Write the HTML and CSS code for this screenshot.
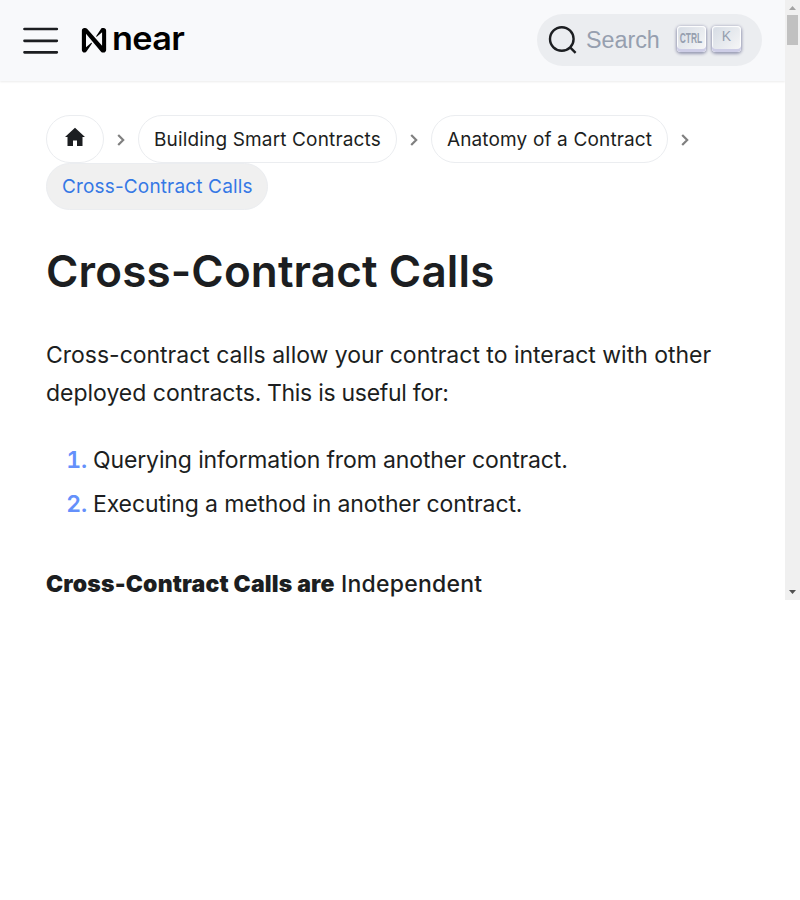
FILE: index.html
```html
<!DOCTYPE html>
<html lang="en">
<head>
<meta charset="utf-8">
<title>Cross-Contract Calls</title>
<link rel="stylesheet" href="styles.css">
</head>
<body>
<div class="viewport">
  <div class="page">
    <header class="navbar">
      <svg class="menu" width="36" height="28" viewBox="0 0 36 28"><path d="M1.500 2H33.800M1.500 13.800H33.800M1.500 25.300H33.800"/></svg>
      <div class="logo">
        <svg width="26" height="27" viewBox="0 0 27 28"><path fill="#000" fill-rule="evenodd" d="M21.2 1.3 15.9 9.2c-.4.6.3 1.2.8.7l5.2-4.5v14.1L6.3 1.7C5.8 1.2 5 .9 4.200.9H3.600C2.100.9.9 2.100.9 3.600v20.200c0 1.500 1.200 2.700 2.700 2.700.9 0 1.800-.5 2.300-1.300l5.300-7.900c.4-.6-.3-1.200-.8-.7L5.200 21.100V6.900l15.600 18.700c.5.6 1.300.9 2.100.9h.5c1.500 0 2.700-1.200 2.700-2.700V3.600C26.100 2.100 24.900.9 23.400.9c-.9 0-1.700.1-2.200.4Z"/></svg>
        <span class="wordmark">near</span>
      </div>
      <button class="search">
        <svg class="glass" width="30" height="30" viewBox="0 0 30 30"><circle cx="13.800" cy="13" r="11.800"/><path d="m22.100 21.300 5.500 5.500"/></svg>
        <span class="label">Search</span>
        <span class="key ctrl"><span>CTRL</span></span>
        <span class="key"><span>K</span></span>
      </button>
    </header>
    <main>
      <nav class="crumbs">
        <a class="pill home"><svg width="20" height="20" viewBox="0 0 20 20"><path fill="#1c1e21" d="M10 .8 0 10h2.500v9H8v-5.500h4V19h5.500v-9H20Z"/></svg></a>
        <svg class="chev" width="8" height="12" viewBox="0 0 8 12"><path d="m1.200 1 5 5-5 5"/></svg>
        <a class="pill"><span>Building Smart Contracts</span></a>
        <svg class="chev" width="8" height="12" viewBox="0 0 8 12"><path d="m1.200 1 5 5-5 5"/></svg>
        <a class="pill"><span>Anatomy of a Contract</span></a>
        <svg class="chev" width="8" height="12" viewBox="0 0 8 12"><path d="m1.200 1 5 5-5 5"/></svg>
      </nav>
      <a class="pill active"><span>Cross-Contract Calls</span></a>
      <h1>Cross-Contract Calls</h1>
      <p>Cross-contract calls allow your contract to interact with other<br>deployed contracts. <span class="snug">This is useful for:</span></p>
      <ol>
        <li>Querying information from another contract.</li>
        <li>Executing a method in another contract.</li>
      </ol>
      <h4><strong>Cross-Contract Calls are</strong> Independent</h4>
    </main>
  </div>
  <div class="scrollbar">
    <svg width="7" height="4" viewBox="0 0 7 4"><path fill="#a3a3a3" d="M0 4 3.500 0 7 4Z"/></svg>
    <div class="thumb"></div>
    <svg class="down" width="7" height="4" viewBox="0 0 7 4"><path fill="#505050" d="M0 0h7L3.500 4Z"/></svg>
  </div>
</div>
</body>
</html>
```
FILE: styles.css
```css
* { box-sizing: border-box; }
body { margin: 0; background: #fff; color: #1c1e21; font-family: Inter, sans-serif; }
.viewport { display: flex; width: 800px; height: 600px; overflow: hidden; }
.page { width: 785px; height: 600px; overflow: hidden; }
.navbar { display: flex; align-items: center; height: 81px; padding: 0 23px; background: #f8f9fb; box-shadow: 0 1px 2px rgba(0,0,0,.08); }
.menu { fill: none; stroke: #1c1e21; stroke-width: 2.700; stroke-linecap: round; }
.logo { display: flex; align-items: center; margin-left: 22px; }
.wordmark { margin: -3px 0 0 5px; font-size: 32px; line-height: 36px; font-weight: 600; color: #000; letter-spacing: -.6px; transform: scaleX(1.070); transform-origin: left; }
.search { display: flex; align-items: center; width: 225px; height: 52px; margin: -1px 0 0 auto; padding: 0 0 0 11px; border: 0; border-radius: 26px; background: #ebedf0; font-family: "Liberation Sans", sans-serif; text-align: left; }
.glass { margin: 2px 0 0 0; fill: none; stroke: #1c1e21; stroke-width: 2.400; }
.label { width: 91px; margin-left: 8px; font-size: 23.300px; color: #969faf; }
.key { display: flex; justify-content: center; width: 29px; height: 26px; margin: -2px 7px 0 -.5px; border-radius: 4px; background: linear-gradient(135deg,#d5dbe4,#f8f8f8); box-shadow: inset 0 -3px 0 #cdcde6, inset 0 0 1px 1px #fff, 0 1px 3px 1px rgba(30,35,90,.4); color: #969faf; font-size: 14px; line-height: 20px; }
.ctrl { font-weight: bold; font-size: 15px; line-height: 24px; }
.ctrl span { flex: none; margin: 0 -10px; transform: scaleX(.560); }
main { padding: 34px 46px 0; }
.crumbs { display: flex; align-items: center; height: 48px; }
.pill { display: flex; align-items: center; height: 48px; padding: 0 15px; border: 1px solid #ebedf0; border-radius: 24px; font-size: 19px; font-weight: 400; white-space: nowrap; letter-spacing: .150px; }
.home { width: 58px; padding: 0 18px; }
.home svg { margin-top: -4px; }
.chev { flex: none; margin: 2px 13px 0 13px; fill: none; stroke: #808080; stroke-width: 2.200; }
.active { width: 222px; height: 47px; background: #f0f0f0; color: #3578e5; }
h1 { margin: 33px 0 0; font-size: 44px; line-height: 57px; font-weight: 600; letter-spacing: .140px; }
p { margin: 36px 0 0; font-size: 23px; line-height: 38px; white-space: nowrap; letter-spacing: -.015px; }
.snug { margin-left: -1px; letter-spacing: -.280px; }
ol { margin: 29px 0 0; padding-left: 47px; font-size: 23px; line-height: 38px; letter-spacing: -.125px; }
li + li { margin-top: 6px; }
li::marker { color: #6490fb; font-weight: 600; }
h4 { margin: 47px 0 0; font-size: 23px; line-height: 29px; font-weight: 500; letter-spacing: .240px; }
strong { font-weight: 900; letter-spacing: .160px; }
.scrollbar { display: flex; flex-direction: column; align-items: center; width: 15px; height: 600px; padding: 6px 0; background: #f0f0f0; }
.thumb { width: 11px; height: 30px; margin-top: 5px; background: #c1c1c1; }
.down { margin-top: auto; }
```
